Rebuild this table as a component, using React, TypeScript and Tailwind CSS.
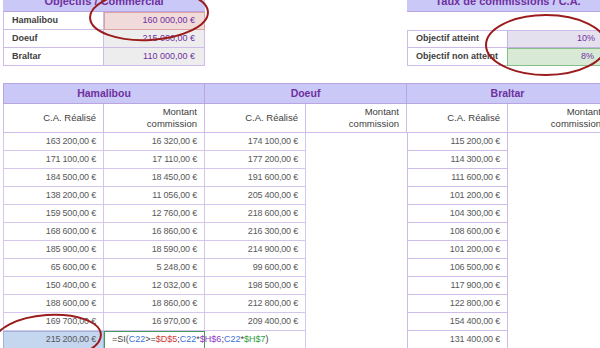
import React from "react";

const hamCA = [
  "163 200,00 €", "171 100,00 €", "184 500,00 €", "138 200,00 €", "159 500,00 €", "168 600,00 €",
  "185 900,00 €", "65 600,00 €", "150 400,00 €", "188 600,00 €", "169 700,00 €", "215 200,00 €",
];
const hamCom = [
  "16 320,00 €", "17 110,00 €", "18 450,00 €", "11 056,00 €", "12 760,00 €", "16 860,00 €",
  "18 590,00 €", "5 248,00 €", "12 032,00 €", "18 860,00 €", "16 970,00 €",
];
const doeuf = [
  "174 100,00 €", "177 200,00 €", "191 600,00 €", "205 400,00 €", "218 600,00 €", "216 300,00 €",
  "214 900,00 €", "99 600,00 €", "198 500,00 €", "212 800,00 €", "209 400,00 €",
];
const braltar = [
  "115 200,00 €", "114 300,00 €", "111 600,00 €", "101 200,00 €", "104 300,00 €", "108 600,00 €",
  "101 200,00 €", "106 500,00 €", "117 900,00 €", "122 800,00 €", "154 400,00 €", "131 400,00 €",
];

const num = "flex items-center justify-end pr-[7px] text-[9px] tracking-[-0.2px] text-[#595959]";

function SubHead({ first }: { first?: boolean }) {
  return null as unknown as React.ReactElement;
}

export default function App() {
  return (
    <div className="relative w-[600px] h-[348px] overflow-hidden bg-white font-['Liberation_Sans',Arial,sans-serif]">
      {/* top section */}
      <div className="flex -mt-[8px] ml-[3px]">
        {/* left: objectifs */}
        <div className="w-[202px] flex flex-col">
          <div className="h-[20px] bg-[#c9c8f7] border-b border-[#b9a6e0] flex items-center justify-center text-[11px] font-bold text-[#7030a0]">
            Objectifs / Commercial
          </div>
          {[
            ["Hamalibou", "160 000,00 €", "bg-[#f0dada] border border-[#dba3a3]"],
            ["Doeuf", "215 000,00 €", "bg-[#ededed] border-b border-[#cdbbe9]"],
            ["Braltar", "110 000,00 €", "bg-[#ededed] border-b border-[#cdbbe9]"],
          ].map(([l, v, c]) => (
            <div key={l} className="flex h-[18px]">
              <div className="w-[101px] border-l border-r border-b border-[#cdbbe9] flex items-center pl-[8px] text-[9px] font-bold text-[#404040]">
                {l}
              </div>
              <div className={`w-[101px] flex items-center justify-end pr-[9px] text-[9px] text-[#7030a0] border-r ${c}`}>
                {v}
              </div>
            </div>
          ))}
        </div>
        {/* right: taux */}
        <div className="ml-[202px] w-[202px] flex flex-col">
          <div className="h-[20px] bg-[#c9c8f7] border-b border-[#b9a6e0] flex items-center justify-center text-[11px] font-bold text-[#7030a0]">
            Taux de commissions / C.A.
          </div>
          <div className="h-[18px]" />
          <div className="flex h-[18px] border-t border-[#cdbbe9]">
            <div className="w-[100px] border-l border-b border-[#cdbbe9] flex items-center pl-[8px] text-[9px] font-bold text-[#404040]">
              Objectif atteint
            </div>
            <div className="w-[102px] border-l border-b border-[#c2b2de] bg-[#e5e0ee] flex items-center justify-end pr-[14px] text-[9px] text-[#7030a0]">
              10%
            </div>
          </div>
          <div className="flex h-[18px]">
            <div className="w-[100px] border-l border-b border-[#cdbbe9] flex items-center pl-[8px] text-[9px] font-bold text-[#404040] whitespace-nowrap">
              Objectif non atteint
            </div>
            <div className="w-[102px] border border-[#86bf86] bg-[#d8e9d5] flex items-center justify-end pr-[14px] text-[9px] text-[#7030a0]">
              8%
            </div>
          </div>
        </div>
      </div>

      {/* main table */}
      <div className="ml-[3px] mt-[17px] w-[606px] grid grid-cols-[101px_101px_101px_101px_101px_101px]">
        {/* header */}
        {["Hamalibou", "Doeuf", "Braltar"].map((n, i) => (
          <div
            key={n}
            className={`col-span-2 h-[21px] bg-[#c9c8f7] border-t border-b border-r border-[#b9a6e0] flex items-center justify-center text-[10.5px] font-bold text-[#7030a0] ${i === 0 ? "border-l" : ""}`}
          >
            {n}
          </div>
        ))}
        {/* subheader */}
        {[0, 1, 2, 3, 4, 5].map((i) => (
          <div
            key={i}
            className={`h-[29px] border-r border-b border-[#cdbbe9] flex flex-col items-end justify-center pr-[7px] text-[9.5px] leading-[12px] text-[#404040] ${i === 0 ? "border-l" : ""}`}
          >
            {i % 2 === 0 ? (
              <span>C.A. Réalisé</span>
            ) : (
              <>
                <span>Montant</span>
                <span>commission</span>
              </>
            )}
          </div>
        ))}
        {/* data rows */}
        {hamCA.map((v, r) => {
          const last = r === 11;
          return (
            <React.Fragment key={r}>
              {last ? (
                <div className={`h-[18px] border border-[#9fb4d6] bg-[#c5d6ef] ${num}`}>{v}</div>
              ) : (
                <div className={`h-[18px] border-l border-r border-b border-[#d5c6ec] ${num}`}>{v}</div>
              )}
              {last ? (
                <div className="relative z-10 h-[18px] border-[1.5px] border-[#3f9a5c] bg-white flex items-center pl-[7px] text-[9px] whitespace-nowrap text-[#404040]">
                  <span>=SI(</span>
                  <span className="text-[#3a6fd8]">C22</span>
                  <span>&gt;=</span>
                  <span className="text-[#d03a3a]">$D$5</span>
                  <span>;</span>
                  <span className="text-[#3a6fd8]">C22</span>
                  <span>*</span>
                  <span className="text-[#8c3cc8]">$H$6</span>
                  <span>;</span>
                  <span className="text-[#3a6fd8]">C22</span>
                  <span>*</span>
                  <span className="text-[#2e9e3e]">$H$7</span>
                  <span>)</span>
                </div>
              ) : (
                <div className={`h-[18px] border-r border-b border-[#d5c6ec] ${num}`}>{hamCom[r]}</div>
              )}
              <div className={`h-[18px] border-r border-b border-[#d5c6ec] ${num}`}>{last ? "" : doeuf[r]}</div>
              <div className="h-[18px]" />
              <div className={`h-[18px] border-l border-r border-b border-[#cdbbe9] ${num}`}>{braltar[r]}</div>
              <div className="h-[18px]" />
            </React.Fragment>
          );
        })}
      </div>

      {/* annotation ellipses */}
      <svg className="absolute inset-0 pointer-events-none z-20" width="600" height="348" viewBox="0 0 600 348">
        <ellipse cx="149" cy="15" rx="59" ry="25" fill="none" stroke="#9b1c1c" strokeWidth="2" transform="rotate(-3 149 15)" />
        <ellipse cx="546" cy="45" rx="60" ry="30" fill="none" stroke="#9b1c1c" strokeWidth="2" />
        <ellipse cx="48" cy="338" rx="53" ry="23" fill="none" stroke="#9b1c1c" strokeWidth="2" transform="rotate(-4 48 338)" />
      </svg>
    </div>
  );
}
